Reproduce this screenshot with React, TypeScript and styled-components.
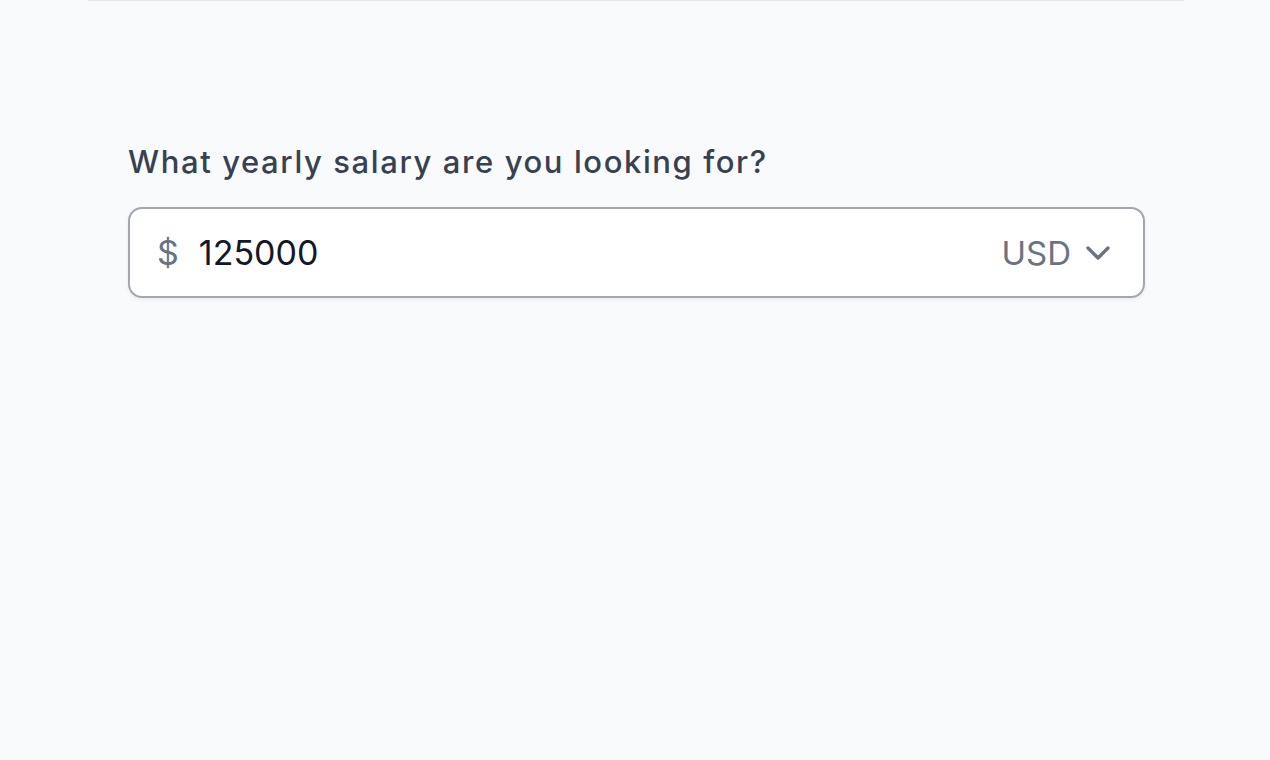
import styled, { createGlobalStyle } from 'styled-components'

const GlobalStyle = createGlobalStyle`
  html, body {
    margin: 0;
    padding: 0;
    background: #f9fafb;
  }
  body {
    font-family: Inter, "Noto Sans", sans-serif;
    -webkit-font-smoothing: antialiased;
  }
`

const Page = styled.div`
  width: 1270px;
  height: 760px;
  background: #f9fafb;
  display: flex;
  justify-content: center;
  padding-left: 2px;
  box-sizing: border-box;
`

const Panel = styled.div`
  width: 1096px;
  border-top: 1px solid #e5e7eb;
  padding: 141px 39px 0 40px;
  box-sizing: border-box;
`

const Label = styled.label`
  display: block;
  font-size: 31px;
  font-weight: 500;
  letter-spacing: 1.6px;
  line-height: 40px;
  color: #374151;
  margin-bottom: 25px;
`

const Field = styled.div`
  display: flex;
  align-items: center;
  height: 91px;
  box-sizing: border-box;
  background: white;
  border: 2px solid #a1a7b1;
  border-radius: 14px;
  box-shadow: 0 2px 4px rgba(0, 0, 0, 0.06);
  padding: 0 32px 0 27px;
`

const Prefix = styled.span`
  font-size: 34px;
  color: #6b7280;
  margin-right: 20px;
`

const Amount = styled.input`
  flex: 1;
  border: none;
  outline: none;
  background: transparent;
  font-family: inherit;
  font-size: 34px;
  color: #111827;
  padding: 0;
`

const Currency = styled.div`
  display: flex;
  align-items: center;
  gap: 14px;
  font-size: 33px;
  color: #6b7280;
`

const App: React.FC = () => {
  return (
    <>
      <GlobalStyle />
      <Page>
        <Panel>
          <Label htmlFor="salary">What yearly salary are you looking for?</Label>
          <Field>
            <Prefix>$</Prefix>
            <Amount id="salary" defaultValue="125000" />
            <Currency>
              USD
              <svg width="26" height="16" viewBox="0 0 26 16" fill="none">
                <path d="M3 3l10 10 10-10" stroke="#6b7280" strokeWidth="3.4" strokeLinecap="round" strokeLinejoin="round" />
              </svg>
            </Currency>
          </Field>
        </Panel>
      </Page>
    </>
  )
}

export default App
